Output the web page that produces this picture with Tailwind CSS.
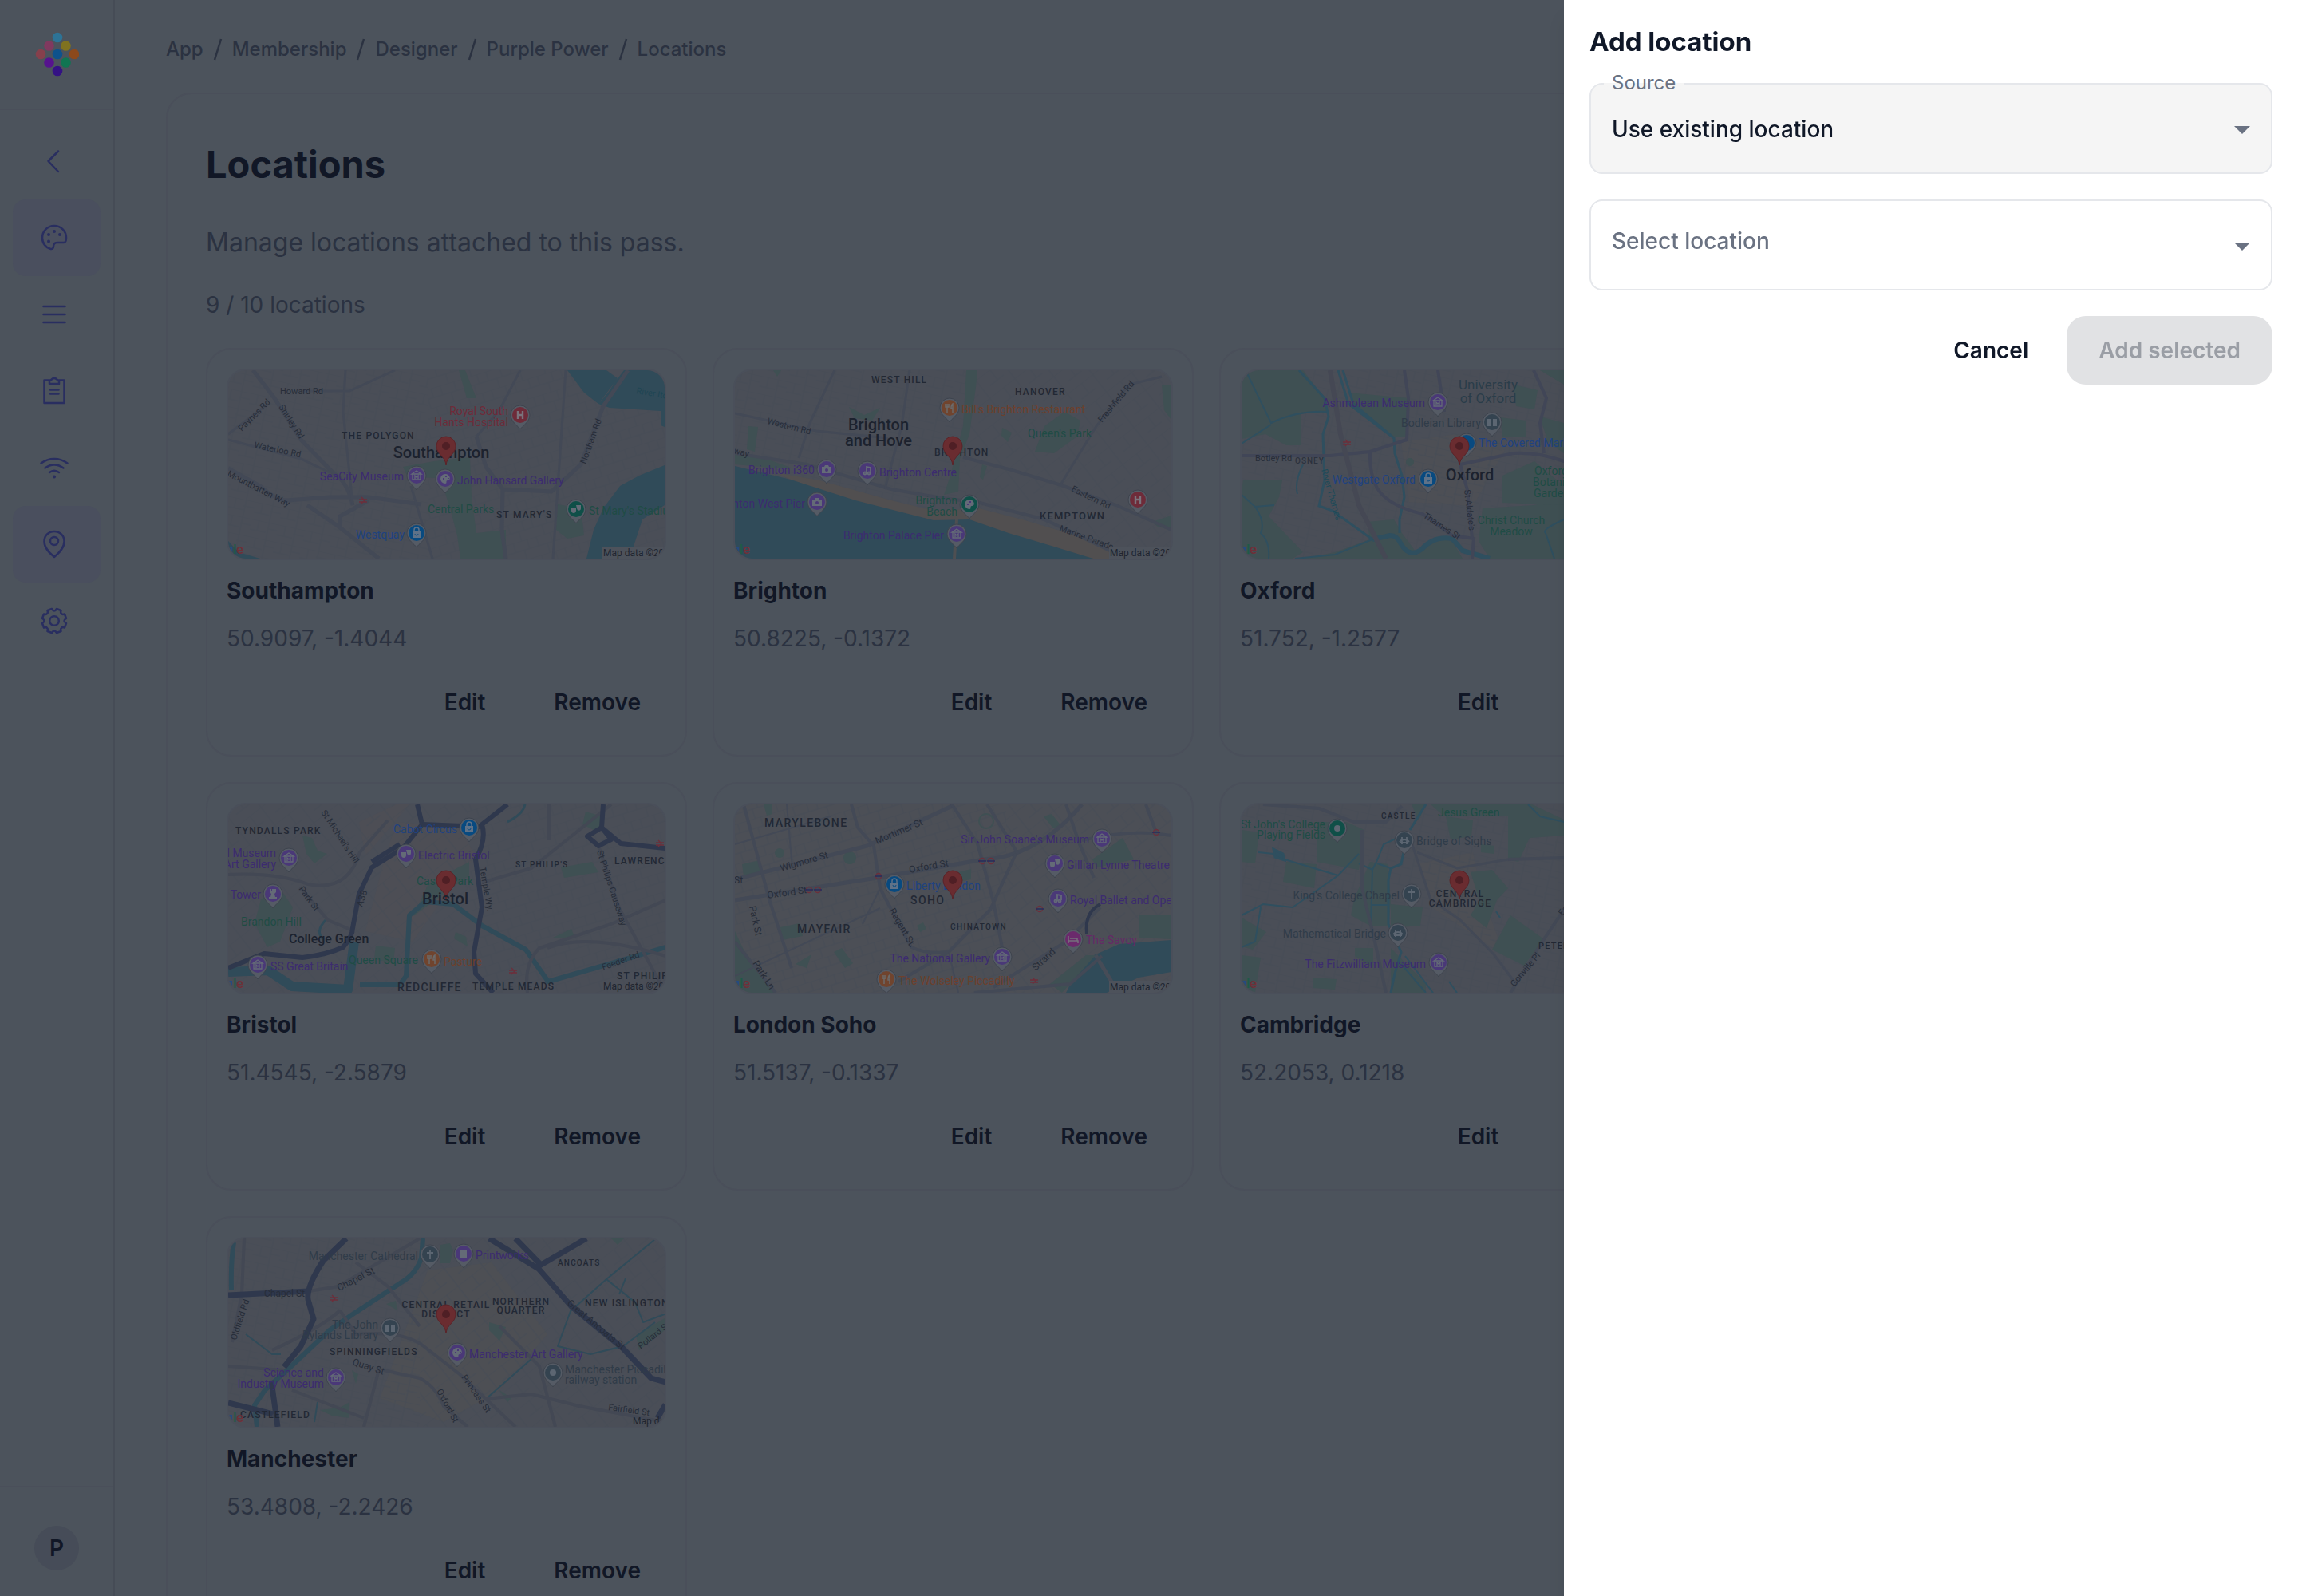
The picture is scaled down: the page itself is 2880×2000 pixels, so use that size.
<!DOCTYPE html>
<html lang="en">

<head>
    <meta charset="UTF-8">
    <meta name="viewport" content="width=device-width, initial-scale=1.0">
    <title>Locations</title>
    <script src="https://cdn.jsdelivr.net/npm/@tailwindcss/browser@4"></script>
</head>

<body class="bg-[#4c535c] font-['Inter',sans-serif] text-[#111726] text-[28px] leading-[44px]">

    <!-- Shared map shapes -->
    <svg class="absolute size-0" aria-hidden="true">
        <defs>
            <pattern id="st1" width="34" height="22" patternUnits="userSpaceOnUse" patternTransform="rotate(12)">
                <path d="M0 0H34M0 13H20M9 0V13M22 0V22M20 8H34" fill="none" stroke="#464b55" stroke-width="1" />
            </pattern>
            <pattern id="st2" width="30" height="24" patternUnits="userSpaceOnUse" patternTransform="rotate(-17)">
                <path d="M0 0H30M0 12H30M8 0V12M19 12V24M26 0V12" fill="none" stroke="#464b55" stroke-width="1" />
            </pattern>
            <pattern id="st3" width="40" height="28" patternUnits="userSpaceOnUse" patternTransform="rotate(-38)">
                <path d="M0 0H40M0 16H22M12 0V16M30 0V28" fill="none" stroke="#464b55" stroke-width="1" />
            </pattern>
            <g id="pin">
                <path d="M0 18C-2 14-12 9-12 0A12 12 0 0 1 12 0C12 9 2 14 0 18Z" fill="#555b65" stroke="#3e444e" stroke-width="1" />
                <circle r="10" fill="currentColor" />
            </g>
            <g id="museum" fill="none" stroke="#646b77" stroke-width="1.3">
                <path d="M-6-2L0-6L6-2ZM-5-2V5H5V-2M-2 4V0L0 2L2 0V4" />
            </g>
            <g id="bag">
                <path d="M-5-2H5V6H-5Z" fill="#5f7288" />
                <path d="M-3-2V-4A3 3 0 0 1 3-4V-2" fill="none" stroke="#5f7288" stroke-width="1.5" />
                <path d="M-2 1A2 2 0 0 0 2 1" fill="none" stroke="#084a80" stroke-width="1" />
            </g>
            <g id="fork" fill="none" stroke="#6b6a6a" stroke-width="1.5">
                <path d="M-5-5V-1H-1V-5M-3-5V6M4 6V-5C2-4 2-1 2 1H4" />
            </g>
            <g id="hosp" fill="none" stroke="#7a737c" stroke-width="2.4">
                <path d="M-3-5V5M3-5V5M-3 0H3" />
            </g>
            <g id="camera">
                <path d="M-6-3H-3L-2-5H2L3-3H6V5H-6Z" fill="#646b77" />
                <circle cy="1" r="2" fill="#4a3878" />
            </g>
            <g id="rook">
                <path d="M-4-6H-2V-4H-1V-6H1V-4H2V-6H4V-2L2 0L3 4H5V6H-5V4H-3L-2 0L-4-2Z" fill="#646b77" />
            </g>
            <g id="music" fill="none" stroke="#646b77" stroke-width="1.8">
                <path d="M-1 3V-5L4-4V2" />
                <circle cx="-3" cy="3" r="1.5" />
                <circle cx="2" cy="3" r="1.5" />
            </g>
            <g id="art" fill="#646b77">
                <path d="M0-6A6 6 0 0 0 0 6C3 6 0 2 3 2C8 2 6-6 0-6Z" />
                <path d="M-3-1H-1V1H-3ZM0-4H2V-2H0ZM3-1H5V0H3Z" fill="#4a3878" />
            </g>
            <g id="masks" fill="#646b77">
                <path d="M-6-2H0V2C0 6-6 6-6 2ZM0-5H6V-1C6 3 1 2 1-1Z" />
            </g>
            <g id="book" fill="#5c6672">
                <path d="M-6-4H-1V5H-6ZM1-4H6V5H1Z" />
            </g>
            <g id="cross" fill="none" stroke="#5c6672" stroke-width="1.8">
                <path d="M0-6V6M-4-2H4" />
            </g>
            <g id="bridge" fill="none" stroke="#5c6672" stroke-width="1.8">
                <path d="M-3-4V5M3-4V5M-6 2C-3-2 3-2 6 2M-5 3H5" />
            </g>
            <g id="dot">
                <circle r="4" fill="#5c6672" />
            </g>
            <g id="marker">
                <path d="M0 0C-1-12-12-13-12-24A12 12 0 0 1 12-24C12-13 1-12 0 0Z" fill="#6a2c30" stroke="#5a2429" stroke-width="1" />
                <circle cy="-24" r="5" fill="#4f1f25" />
            </g>
            <g id="rail">
                <path d="M-5-1H5M-5 2H5M-2-4L2 0L-2 4" fill="none" stroke="#6c2f3b" stroke-width="1.4" />
            </g>
            <g id="tube" fill="none">
                <circle r="3.500" stroke="#6c2f3b" stroke-width="1.300" />
                <path d="M-5 0H5" stroke="#262c5c" stroke-width="1.500" />
            </g>
            <g id="goog" class="font-['Roboto',sans-serif] text-[17px] font-medium">
                <path d="M1 221H5V227Z" fill="#264a80" />
                <text x="6" y="230" fill="#1f5a48">l</text>
                <text x="10" y="230" fill="#6e3039">e</text>
            </g>
        </defs>
    </svg>

    <div class="flex h-screen overflow-hidden">

        <!-- Sidebar -->
        <aside class="flex w-36 shrink-0 flex-col border-r-2 border-[#464c56]">
            <a href="#" aria-label="Home" class="flex h-[138px] items-center justify-center border-b-2 border-[#4a4f5a]">
                <svg class="size-14" viewBox="0 0 56 56">
                    <circle cx="29" cy="7" r="6.300" fill="#2d7396" />
                    <circle cx="18.500" cy="17.500" r="6.300" fill="#80395f" />
                    <circle cx="39.500" cy="17.500" r="6.300" fill="#80721f" />
                    <circle cx="8" cy="28" r="6.300" fill="#86404c" />
                    <circle cx="29" cy="28" r="6.300" fill="#0e528c" />
                    <circle cx="50" cy="28" r="6.300" fill="#8c491c" />
                    <circle cx="18.500" cy="38.500" r="6.300" fill="#56138e" />
                    <circle cx="39.500" cy="38.500" r="6.300" fill="#107552" />
                    <circle cx="29" cy="49" r="6.300" fill="#341284" />
                </svg>
            </a>
            <nav class="flex flex-1 flex-col p-4 text-[#292e60]">
                <a href="#" aria-label="Back" class="flex h-24 items-center rounded-2xl px-8">
                    <svg class="size-10" viewBox="0 0 40 40" fill="none" stroke="currentColor" stroke-width="2.500" stroke-linecap="round" stroke-linejoin="round">
                        <path d="M25 7.500L12.500 20L25 33" />
                    </svg>
                </a>
                <a href="#" aria-label="Design" class="flex h-24 items-center rounded-2xl bg-[#4a4f5e] px-8">
                    <svg class="size-10" viewBox="0 0 40 40" fill="none" stroke="currentColor" stroke-width="2.500" stroke-linejoin="round">
                        <path d="M35 20C35 11.500 28.500 5 20 5S5 11.500 5 20c0 7 4.500 12.500 10.500 14 2 .4 3.500-1 3.500-3 0-3 1.500-5 4.500-5h8.500c2.500 0 3-2 3-6z" />
                        <path d="M20 12h.01M13 16h.01M27 16h.01M13 24.500h.01" stroke-width="4" stroke-linecap="round" />
                    </svg>
                </a>
                <a href="#" aria-label="Fields" class="flex h-24 items-center rounded-2xl px-8">
                    <svg class="size-10" viewBox="0 0 40 40" fill="none" stroke="currentColor" stroke-width="2.500" stroke-linecap="round">
                        <path d="M6.500 10h27M6.500 20h27M6.500 30h27" />
                    </svg>
                </a>
                <a href="#" aria-label="Form" class="flex h-24 items-center rounded-2xl px-8">
                    <svg class="size-10" viewBox="0 0 40 40" fill="none" stroke="currentColor" stroke-width="2.500" stroke-linecap="round" stroke-linejoin="round">
                        <path d="M14 6.500H7.500V35h25V6.500H26" />
                        <path d="M14 11V7.500C16 7 16.500 4 20 4s4 3 6 3.500V11zM15 18.500h10.500M15 23.500h10.500" />
                    </svg>
                </a>
                <a href="#" aria-label="NFC" class="flex h-24 items-center rounded-2xl px-8">
                    <svg class="size-10" viewBox="0 0 40 40" fill="none" stroke="currentColor" stroke-width="2.500" stroke-linecap="round">
                        <path d="M3.500 14.500c10-7.500 23-7.500 33 0M8.500 20.500c7-5.500 16-5.500 23 0M14 26c4-3 8-3 12 0" />
                        <path d="M20 31.500h.01" stroke-width="4" />
                    </svg>
                </a>
                <a href="#" aria-label="Locations" class="flex h-24 items-center rounded-2xl bg-[#4a4f5e] px-8">
                    <svg class="size-10" viewBox="0 0 40 40" fill="none" stroke="currentColor" stroke-width="2.500" stroke-linejoin="round">
                        <path d="M20 36C14 31 7.500 25 7.500 16.500C7.500 9 13 4 20 4s12.500 5 12.500 12.500C32.500 25 26 31 20 36z" />
                        <circle cx="20" cy="16" r="5" />
                    </svg>
                </a>
                <a href="#" aria-label="Settings" class="flex h-24 items-center rounded-2xl px-8">
                    <svg class="size-10" viewBox="0 0 40 40" fill="none" stroke="currentColor" stroke-width="2.500" stroke-linejoin="round">
                        <path d="M32.500 20Q32.500 18.500 35 17L33 11.500Q30 12.500 29 11Q27.500 10 28.500 7L23 5Q21.500 7.500 20 7.500Q18.500 7.500 17 5L11.500 7Q12.500 10 11 11Q10 12.500 7 11.500L5 17Q7.500 18.500 7.500 20Q7.500 21.500 5 23L7 28.500Q10 27.500 11 29Q12.500 30 11.500 33L17 35Q18.500 32.500 20 32.500Q21.500 32.500 23 35L28.500 33Q27.500 30 29 29Q30 27.500 33 28.500L35 23Q32.500 21.500 32.500 20Z" />
                        <circle cx="20" cy="20" r="5.800" />
                    </svg>
                </a>
            </nav>
            <div class="flex justify-center border-t-2 border-[#4a4f5a] pt-12 pb-8">
                <button class="size-14 rounded-full bg-[#464c58] font-semibold">P</button>
            </div>
        </aside>

        <!-- Page -->
        <div class="flex flex-1 flex-col px-16">
            <nav aria-label="Breadcrumb" class="pt-10 text-2xl leading-[44px] font-medium text-[#2b3241]">
                <ol class="flex items-center">
                    <li><a href="#">App</a></li>
                    <li class="flex items-center">
                        <svg class="h-7 w-9" viewBox="0 0 36 28" stroke="currentColor" stroke-width="2.500"><path d="M14 27L22 1" /></svg>
                        <a href="#">Membership</a>
                    </li>
                    <li class="flex items-center">
                        <svg class="h-7 w-9" viewBox="0 0 36 28" stroke="currentColor" stroke-width="2.500"><path d="M14 27L22 1" /></svg>
                        <a href="#">Designer</a>
                    </li>
                    <li class="flex items-center">
                        <svg class="h-7 w-9" viewBox="0 0 36 28" stroke="currentColor" stroke-width="2.500"><path d="M14 27L22 1" /></svg>
                        <a href="#">Purple Power</a>
                    </li>
                    <li class="flex items-center">
                        <svg class="h-7 w-9" viewBox="0 0 36 28" stroke="currentColor" stroke-width="2.500"><path d="M14 27L22 1" /></svg>
                        <a href="#">Locations</a>
                    </li>
                </ol>
            </nav>

            <main class="mt-8 shrink-0 rounded-[32px] border-2 border-[#4a4f5a] px-12 pt-[50px] pb-12">
                <h1 class="text-[47px] leading-[76px] font-bold">Locations</h1>
                <p class="mt-9 text-[32px] leading-[48px] text-[#2b3241]">Manage locations attached to this pass.</p>
                <p class="mt-8 text-[#2b3241]">9 / 10 locations</p>

                <div class="mt-8 grid grid-cols-4 gap-8">

                    <!-- Southampton -->
                    <article class="flex flex-col gap-4 rounded-[32px] border-2 border-[#4a4f5a] p-6">
                        <div class="h-60 overflow-hidden rounded-3xl border-2 border-[#4a4f5a]">
                            <svg class="block h-full w-full bg-[#4a4e57] font-['Roboto',sans-serif]" viewBox="0 0 547 236" preserveAspectRatio="xMidYMid slice">
                                <rect width="250" height="236" fill="url(#st1)" />
                                <rect x="250" width="297" height="236" fill="url(#st2)" />
                                <g fill="#304b59">
                                    <path d="M425 0L446 28L464 42L478 47L542 51V69L547 71V0Z" />
                                    <path d="M547 119L515 132L491 145L470 173L458 200L449 236H503L519 187L536 176L547 169Z" />
                                    <path d="M0 214L13 228L40 236H0Z" />
                                </g>
                                <g fill="#3f5053">
                                    <path d="M219 121L258 114L303 109L305 159L311 204L348 200V236H291L287 207L278 173L266 135L225 134Z" />
                                    <path d="M289 0H297L311 35H299Z" />
                                    <path d="M413 168L442 173L446 207L425 211L411 200Z" />
                                </g>
                                <path d="M474 0L488 10L476 28L464 42L496 0Z" fill="#4a4e57" />
                                <g fill="none" stroke="#434956" stroke-width="5">
                                    <path d="M31 0L58 35L91 87L131 128Q150 140 156 169M0 123L40 145Q60 163 74 163L127 159H176L242 168M99 169L140 197L189 236M176 163L140 183V197" />
                                    <path d="M311 83L323 121L344 149L405 152L442 118L470 45L501 0M344 149L343 200L348 236" />
                                </g>
                                <g fill="none" stroke="#434956" stroke-width="3">
                                    <path d="M147 0L144 52L156 169M90 26H152L209 0M0 80L50 42M0 87L91 111L127 128M229 145L256 236M423 0L407 236M366 0L340 50L311 83" />
                                </g>
                                <g fill="#272d39" class="text-[11px]">
                                    <text x="65" y="30">Howard Rd</text>
                                    <text transform="translate(17 77) rotate(-45)">Paynes Rd</text>
                                    <text transform="translate(63 46) rotate(57)">Shirley Rd</text>
                                    <text transform="translate(32 97) rotate(12)">Waterloo Rd</text>
                                    <text transform="translate(-2 132) rotate(27)">Mountbatten Way</text>
                                    <text transform="translate(448 118) rotate(-70)">Northam Rd</text>
                                    <text transform="translate(511 29) rotate(10)" fill="#1f4553">River Itchen</text>
                                </g>
                                <g fill="#222834" class="text-[12px] font-medium tracking-widest">
                                    <text x="142" y="86">THE POLYGON</text>
                                    <text x="336" y="185">ST MARY'S</text>
                                </g>
                                <text x="267" y="110" text-anchor="middle" fill="#1c222e" class="text-[20px] font-medium">Southampton</text>
                                <g class="text-[14px]">
                                    <text x="351" y="56" text-anchor="end" fill="#6e2b39">Royal South</text>
                                    <text x="351" y="70" text-anchor="end" fill="#6e2b39">Hants Hospital</text>
                                    <text x="220" y="138" text-anchor="end" fill="#3c2b70">SeaCity Museum</text>
                                    <text x="287" y="143" fill="#3c2b70">John Hansard Gallery</text>
                                    <text x="250" y="179" fill="#1f4c45">Central Parks</text>
                                    <text x="452" y="181" fill="#1f4c45">St Mary's Stadium</text>
                                    <text x="221" y="211" text-anchor="end" fill="#204280">Westquay</text>
                                </g>
                                <use href="#pin" x="366" y="56" class="text-[#6e2b39]" /><use href="#hosp" x="366" y="56" />
                                <use href="#pin" x="236" y="132" class="text-[#4a3878]" /><use href="#museum" x="236" y="132" />
                                <use href="#pin" x="272" y="136" class="text-[#4a3878]" /><use href="#art" x="272" y="136" />
                                <use href="#pin" x="436" y="174" class="text-[#0f4f48]" /><use href="#masks" x="436" y="174" />
                                <use href="#pin" x="236" y="204" class="text-[#084a80]" /><use href="#bag" x="236" y="204" />
                                <use href="#rail" x="169" y="163" />
                                <use href="#marker" x="273" y="119" />
                                <rect x="469" y="221" width="78" height="15" fill="#4d525b" />
                                <text x="470" y="233" fill="#1f2530" class="text-[12px]">Map data ©2025</text>
                                <use href="#goog" />
                            </svg>
                        </div>
                        <h2 class="font-bold">Southampton</h2>
                        <p class="text-[#2b3241]">50.9097, -1.4044</p>
                        <div class="flex justify-end gap-[22px]">
                            <button class="h-[84px] rounded-3xl px-8 font-semibold">Edit</button>
                            <button class="h-[84px] rounded-3xl px-8 font-semibold">Remove</button>
                        </div>
                    </article>

                    <!-- Brighton -->
                    <article class="flex flex-col gap-4 rounded-[32px] border-2 border-[#4a4f5a] p-6">
                        <div class="h-60 overflow-hidden rounded-3xl border-2 border-[#4a4f5a]">
                            <svg class="block h-full w-full bg-[#4a4e57] font-['Roboto',sans-serif]" viewBox="0 0 547 236" preserveAspectRatio="xMidYMid slice">
                                <rect width="290" height="236" fill="url(#st1)" />
                                <rect x="290" width="257" height="236" fill="url(#st3)" />
                                <path d="M50 128L106 138L196 163L249 176L306 173L360 187L417 204L466 221L474 236H449L249 200L70 137Z" fill="#514f50" />
                                <path d="M0 120L70 137L151 163L249 188L294 187L343 204L400 221L449 236H0Z" fill="#304b59" />
                                <g fill="#3f5053">
                                    <path d="M0 102L45 113L70 122L45 122L0 118Z" />
                                    <path d="M376 102L388 70L413 52L433 63L429 83L400 104Z" />
                                    <path d="M290 0H304L302 21L294 80L282 111L280 152L262 156L270 132L286 70Z" />
                                    <path d="M17 70L29 71L25 102L15 99ZM143 46L162 56L182 47L172 63L150 60ZM535 18H547V62L538 50ZM310 118L316 120L311 137L307 134ZM335 72L347 78L342 90L334 82ZM48 0H58L53 8Z" />
                                    <path d="M523 190L547 182V200L530 196Z" />
                                </g>
                                <g fill="none" stroke="#434956" stroke-width="4">
                                    <path d="M0 104L90 118L196 149L253 159L307 166L388 187L474 228M286 109L347 125L409 144L478 169L547 200" />
                                    <path d="M219 0L209 70L188 149M535 8L494 18L453 70L409 142" stroke-width="3" />
                                    <path d="M0 54L102 76L192 85M125 0L94 66L80 110" stroke-width="3" />
                                    <path d="M278 187L275 236" stroke="#4e4f52" />
                                </g>
                                <g fill="#272d39" class="text-[11px]">
                                    <text transform="translate(40 67) rotate(14)">Western Rd</text>
                                    <text transform="translate(460 66) rotate(-50)">Freshfield Rd</text>
                                    <text transform="translate(-2 104) rotate(14)">way</text>
                                    <text transform="translate(421 151) rotate(26)">Eastern Rd</text>
                                    <text transform="translate(406 201) rotate(20)">Marine Parade</text>
                                </g>
                                <g fill="#222834" class="text-[12px] font-medium tracking-widest">
                                    <text x="171" y="16">WEST HILL</text>
                                    <text x="351" y="31">HANOVER</text>
                                    <text x="250" y="107">BRIGHTON</text>
                                    <text x="382" y="187" class="text-[13px]">KEMPTOWN</text>
                                </g>
                                <g text-anchor="middle" fill="#1c222e" class="text-[20px] font-medium">
                                    <text x="180" y="75">Brighton</text>
                                    <text x="180" y="95">and Hove</text>
                                </g>
                                <g class="text-[14px]">
                                    <text x="284" y="54" fill="#6e402c">Bill's Brighton Restaurant</text>
                                    <text x="367" y="84" fill="#1f4c45">Queen's Park</text>
                                    <text x="100" y="130" text-anchor="end" fill="#3c2b70">Brighton i360</text>
                                    <text x="181" y="133" fill="#3c2b70">Brighton Centre</text>
                                    <text x="88" y="172" text-anchor="end" fill="#3c2b70">Brighton West Pier</text>
                                    <text x="279" y="168" text-anchor="end" fill="#1f4c45">Brighton</text>
                                    <text x="279" y="182" text-anchor="end" fill="#1f4c45">Beach</text>
                                    <text x="262" y="212" text-anchor="end" fill="#3c2b70">Brighton Palace Pier</text>
                                </g>
                                <use href="#pin" x="269" y="47" class="text-[#70442e]" /><use href="#fork" x="269" y="47" />
                                <use href="#pin" x="115" y="124" class="text-[#4a3878]" /><use href="#camera" x="115" y="124" />
                                <use href="#pin" x="166" y="126" class="text-[#4a3878]" /><use href="#music" x="166" y="126" />
                                <use href="#pin" x="103" y="165" class="text-[#4a3878]" /><use href="#camera" x="103" y="165" />
                                <use href="#pin" x="294" y="168" class="text-[#0f4f48]" /><use href="#art" x="294" y="168" />
                                <use href="#pin" x="505" y="162" class="text-[#6e2b39]" /><use href="#hosp" x="505" y="162" />
                                <use href="#pin" x="278" y="205" class="text-[#4a3878]" /><use href="#museum" x="278" y="205" />
                                <use href="#marker" x="273" y="119" />
                                <rect x="469" y="221" width="78" height="15" fill="#4d525b" />
                                <text x="470" y="233" fill="#1f2530" class="text-[12px]">Map data ©2025</text>
                                <use href="#goog" />
                            </svg>
                        </div>
                        <h2 class="font-bold">Brighton</h2>
                        <p class="text-[#2b3241]">50.8225, -0.1372</p>
                        <div class="flex justify-end gap-[22px]">
                            <button class="h-[84px] rounded-3xl px-8 font-semibold">Edit</button>
                            <button class="h-[84px] rounded-3xl px-8 font-semibold">Remove</button>
                        </div>
                    </article>

                    <!-- Oxford -->
                    <article class="flex flex-col gap-4 rounded-[32px] border-2 border-[#4a4f5a] p-6">
                        <div class="h-60 overflow-hidden rounded-3xl border-2 border-[#4a4f5a]">
                            <svg class="block h-full w-full bg-[#4a4e57] font-['Roboto',sans-serif]" viewBox="0 0 547 236" preserveAspectRatio="xMidYMid slice">
                                <path d="M200 90L270 80L330 100L290 170L210 165Z" fill="#4d4f55" />
                                <rect width="547" height="236" fill="url(#st1)" />
                                <g fill="#3f5053">
                                    <path d="M0 0H77L104 35L107 52L75 54V94L56 94L30 80L0 86Z" />
                                    <path d="M134 28L209 35L207 83H191L144 49Z" />
                                    <path d="M2 137L51 138L47 159L34 183L77 228L64 236H0V152Z" />
                                    <path d="M157 190L191 187L201 204L221 231L244 211L264 214L277 236H77L117 228L161 212Z" />
                                    <path d="M302 173L367 169L404 159H547V236H311L297 214Z" />
                                    <path d="M324 59L357 63V83H327ZM374 58L404 66H547V104H404L384 90ZM327 132L367 114L404 145V169L327 166ZM374 0H547V40L404 18ZM341 18L371 25L367 49L344 45Z" />
                                    <circle cx="211" cy="115" r="5" />
                                </g>
                                <g fill="none" stroke="#2f4f5f" stroke-width="3">
                                    <path d="M72 0L104 35L109 58L102 80L104 138L97 170L114 176L164 212" />
                                    <path d="M164 212L186 207Q195 207 200 218Q211 236 226 224Q241 207 264 211L277 226L311 236" stroke-width="6" />
                                    <path d="M121 0L134 42L191 85L192 104L201 132L204 159L198 187V204M127 0L140 42L191 85" />
                                    <path d="M7 4L37 66Q70 50 107 52M37 68L0 92M0 156L17 171L41 169M17 171Q30 190 24 204Q36 215 34 236M164 212L117 231L67 236M404 187Q375 200 381 204L392 236M70 155Q66 140 77 118" stroke-width="2" />
                                </g>
                                <g fill="none" stroke="#414657" stroke-width="4">
                                    <path d="M0 107H111L161 102L207 87L209 35L204 0M161 102Q160 130 170 148Q184 170 227 180L264 207L291 211L289 236" />
                                    <path d="M274 118L341 104Q370 102 404 114H547M366 0L382 35L374 66L379 104M246 0L254 52M274 118L283 150L289 211" />
                                    <path d="M111 0L124 80L147 169L181 236" stroke="#454854" stroke-width="6" />
                                </g>
                                <g fill="#272d39" class="text-[11px]">
                                    <text x="17" y="114">Botley Rd</text>
                                    <text transform="translate(227 184) rotate(33)">Thames St</text>
                                    <text transform="translate(279 150) rotate(83)">St Aldate's</text>
                                    <text transform="translate(100 125) rotate(74)" fill="#1e4a58">River Thames</text>
                                </g>
                                <text x="67" y="117" fill="#2c323e" class="text-[10px] font-medium tracking-widest">OSNEY</text>
                                <g text-anchor="middle" fill="#2a3d4a" class="text-[17px]">
                                    <text x="309" y="24">University</text>
                                    <text x="309" y="41">of Oxford</text>
                                </g>
                                <g class="text-[14px]">
                                    <text x="230" y="46" text-anchor="end" fill="#3c2b70">Ashmolean Museum</text>
                                    <text x="300" y="71" text-anchor="end" fill="#303c49">Bodleian Library</text>
                                    <text x="297" y="96" fill="#204280">The Covered Market</text>
                                    <text x="218" y="142" text-anchor="end" fill="#204280">Westgate Oxford</text>
                                    <text x="367" y="131" fill="#1f4c45">Oxford</text>
                                    <text x="365" y="145" fill="#1f4c45">Botanic</text>
                                    <text x="366" y="159" fill="#1f4c45">Garden</text>
                                    <text x="338" y="193" text-anchor="middle" fill="#1f4c45">Christ Church</text>
                                    <text x="338" y="207" text-anchor="middle" fill="#1f4c45">Meadow</text>
                                </g>
                                <text x="286" y="138" text-anchor="middle" fill="#1c222e" class="text-[20px] font-medium">Oxford</text>
                                <use href="#pin" x="246" y="40" class="text-[#4a3878]" /><use href="#museum" x="246" y="40" />
                                <use href="#pin" x="314" y="65" class="text-[#344350]" /><use href="#book" x="314" y="65" />
                                <use href="#pin" x="282" y="91" class="text-[#084a80]" />
                                <use href="#pin" x="234" y="136" class="text-[#084a80]" /><use href="#bag" x="234" y="136" />
                                <use href="#rail" x="132" y="91" />
                                <use href="#marker" x="273" y="119" />
                                <use href="#goog" />
                            </svg>
                        </div>
                        <h2 class="font-bold">Oxford</h2>
                        <p class="text-[#2b3241]">51.752, -1.2577</p>
                        <div class="flex justify-end gap-[22px]">
                            <button class="h-[84px] rounded-3xl px-8 font-semibold">Edit</button>
                            <button class="h-[84px] rounded-3xl px-8 font-semibold">Remove</button>
                        </div>
                    </article>

                    <article class="rounded-[32px] border-2 border-[#4a4f5a]"></article>

                    <!-- Bristol -->
                    <article class="flex flex-col gap-4 rounded-[32px] border-2 border-[#4a4f5a] p-6">
                        <div class="h-60 overflow-hidden rounded-3xl border-2 border-[#4a4f5a]">
                            <svg class="block h-full w-full bg-[#4a4e57] font-['Roboto',sans-serif]" viewBox="0 0 547 236" preserveAspectRatio="xMidYMid slice">
                                <path d="M211 22L290 29L310 65L290 89L231 172L172 159L195 72ZM164 22L211 0H227L172 65Z" fill="#4d4e55" />
                                <rect width="300" height="236" fill="url(#st3)" />
                                <rect x="300" width="247" height="236" fill="url(#st2)" />
                                <g fill="#3f5053">
                                    <path d="M251 99L302 72V89L247 129L232 140ZM41 119L65 105L81 129L65 172L49 179L33 149ZM93 39L105 42L112 58L124 62L108 74L98 62ZM448 9L468 15L464 35L444 25ZM185 177L209 180L207 199L183 194ZM417 79L456 72L464 85L421 92ZM285 160L298 166L300 178L283 168ZM405 168L430 156L434 166Z" />
                                </g>
                                <g fill="none" stroke="#304b59" stroke-width="8" stroke-linejoin="round">
                                    <path d="M0 210L50 208L80 228L150 232L158 172" stroke-width="12" />
                                    <path d="M165 226H215L223 215L227 139L247 122L282 125L318 152L373 182L401 222L460 205L548 179" stroke-width="6" />
                                    <path d="M372 0Q370 12 350 22M122 145Q108 160 120 170" stroke-width="3" />
                                </g>
                                <g fill="none" stroke="#434854" stroke-width="4">
                                    <path d="M318 98L380 80L430 40L480 0M0 88Q60 85 100 100Q150 110 165 60L200 20M548 236L490 130L464 52M375 236Q370 200 390 180L480 150L548 120M400 180Q450 160 548 190M90 104L125 145L156 158M402 0V45" />
                                </g>
                                <g fill="none" stroke="#2f384d" stroke-width="6" stroke-linejoin="round">
                                    <path d="M0 205L45 187L93 192Q125 188 144 179Q156 165 156 155L164 112L180 79L219 55L243 25L237 0M180 72L215 50" />
                                    <path d="M350 0L318 25Q324 45 310 69L318 129L308 185L310 212L332 236M243 25L318 28" />
                                    <path d="M470 0L468 29L450 40L464 52L480 44L468 29L492 49L548 55" />
                                </g>
                                <g fill="#272d39" class="text-[11px]">
                                    <text transform="translate(116 10) rotate(57)">St Michael's Hill</text>
                                    <text transform="translate(88 106) rotate(54)">Park St</text>
                                    <text transform="translate(168 129) rotate(-72)" class="text-[12px]">A38</text>
                                    <text transform="translate(315 79) rotate(80)">Temple Wy.</text>
                                    <text transform="translate(462 59) rotate(72)">St Philips Causeway</text>
                                    <text transform="translate(470 208) rotate(-20)">Feeder Rd</text>
                                </g>
                                <g fill="#222834" class="text-[12px] font-medium tracking-widest">
                                    <text x="9" y="37">TYNDALLS PARK</text>
                                    <text x="360" y="79" class="text-[10px]">ST PHILIP'S</text>
                                    <text x="484" y="75">LAWRENCE HILL</text>
                                    <text x="487" y="219">ST PHILIP'S</text>
                                    <text x="212" y="234" class="text-[14px]">REDCLIFFE</text>
                                    <text x="306" y="232">TEMPLE MEADS</text>
                                </g>
                                <g class="text-[14px]">
                                    <text x="60" y="66" text-anchor="end" fill="#3c2b70">Bristol Museum</text>
                                    <text x="60" y="80" text-anchor="end" fill="#3c2b70">&amp; Art Gallery</text>
                                    <text x="41" y="118" text-anchor="end" fill="#3c2b70">Tower</text>
                                    <text x="287" y="36" text-anchor="end" fill="#204280">Cabot Circus</text>
                                    <text x="238" y="69" fill="#3c2b70">Electric Bristol</text>
                                    <text x="236" y="101" fill="#1f4c45">Castle Park</text>
                                    <text x="16" y="152" fill="#1f4c45">Brandon Hill</text>
                                    <text x="151" y="200" fill="#1f4c45">Queen Square</text>
                                    <text x="270" y="202" fill="#6e402c">Pasture</text>
                                    <text x="53" y="208" fill="#3c2b70">SS Great Britain</text>
                                </g>
                                <text x="76" y="174" fill="#1c222e" class="text-[16px] font-medium">College Green</text>
                                <use href="#pin" x="76" y="67" class="text-[#4a3878]" /><use href="#museum" x="76" y="67" />
                                <use href="#pin" x="56" y="112" class="text-[#4a3878]" /><use href="#rook" x="56" y="112" />
                                <use href="#pin" x="302" y="29" class="text-[#084a80]" /><use href="#bag" x="302" y="29" />
                                <use href="#pin" x="223" y="62" class="text-[#4a3878]" /><use href="#masks" x="223" y="62" />
                                <use href="#pin" x="255" y="194" class="text-[#70442e]" /><use href="#fork" x="255" y="194" />
                                <use href="#pin" x="37" y="201" class="text-[#4a3878]" /><use href="#museum" x="37" y="201" />
                                <use href="#rail" x="541" y="49" /><use href="#rail" x="357" y="209" />
                                <use href="#marker" x="273" y="119" />
                                <text x="272" y="125" text-anchor="middle" fill="#1c222e" class="text-[20px] font-medium">Bristol</text>
                                <text x="470" y="232" fill="#1f2530" class="text-[12px]">Map data ©2025</text>
                                <use href="#goog" />
                            </svg>
                        </div>
                        <h2 class="font-bold">Bristol</h2>
                        <p class="text-[#2b3241]">51.4545, -2.5879</p>
                        <div class="flex justify-end gap-[22px]">
                            <button class="h-[84px] rounded-3xl px-8 font-semibold">Edit</button>
                            <button class="h-[84px] rounded-3xl px-8 font-semibold">Remove</button>
                        </div>
                    </article>

                    <!-- London Soho -->
                    <article class="flex flex-col gap-4 rounded-[32px] border-2 border-[#4a4f5a] p-6">
                        <div class="h-60 overflow-hidden rounded-3xl border-2 border-[#4a4f5a]">
                            <svg class="block h-full w-full bg-[#4c4f56] font-['Roboto',sans-serif]" viewBox="0 0 547 236" preserveAspectRatio="xMidYMid slice">
                                <rect width="340" height="236" fill="url(#st2)" />
                                <rect x="340" width="207" height="236" fill="url(#st3)" />
                                <path d="M415 236L427 212L450 189L482 175L547 170V210L506 217L466 236Z" fill="#304b59" />
                                <g fill="#3f5053">
                                    <path d="M0 159L19 199L51 236H0ZM9 75L31 70L33 87L11 90ZM57 154L81 149L85 165L59 170ZM124 185L134 180L148 199L138 205ZM448 69L486 42L500 69L454 79ZM387 15L397 12L409 27L399 30ZM395 225L440 189L452 189L410 236ZM506 139H547V169L506 167ZM280 85L296 81V94L284 96ZM36 0H47V12L40 14ZM228 152L236 148L240 156L232 160ZM76 200L96 188L90 205Z" />
                                    <circle cx="56" cy="61" r="6" />
                                    <circle cx="144" cy="67" r="8" />
                                </g>
                                <circle cx="315" cy="21" r="9" fill="none" stroke="#3f5053" stroke-width="2" />
                                <path d="M452 189L472 222" fill="none" stroke="#464c57" stroke-width="5" />
                                <g fill="none" stroke="#434956" stroke-width="5">
                                    <path d="M0 120L178 92L312 69Q380 65 435 0M0 94L166 52L272 2" />
                                    <path d="M146 0L154 29L174 52L182 105L221 179Q240 188 268 185L320 132L352 62M205 222L268 185M0 172L51 236M11 0L43 119L71 205" stroke-width="4" />
                                    <path d="M272 0L304 49L324 122L336 185M415 0L432 50L450 92M324 229L415 172L458 129M435 45Q500 30 546 39M316 0L355 62M515 0L528 35M300 236L420 225L460 190" stroke-width="4" />
                                    <path d="M0 50L120 15M0 215L182 130M65 0L72 80M182 105L160 150M268 185L280 236" stroke-width="2" />
                                </g>
                                <path d="M458 125Q438 135 441 162" fill="none" stroke="#2f384d" stroke-width="4" />
                                <g fill="#272d39" class="text-[12px]">
                                    <text transform="translate(178 50) rotate(-23)">Mortimer St</text>
                                    <text transform="translate(58 84) rotate(-16)">Wigmore St</text>
                                    <text transform="translate(219 86) rotate(-10)">Oxford St</text>
                                    <text transform="translate(41 118) rotate(-8)">Oxford St</text>
                                    <text x="-1" y="99">St</text>
                                    <text transform="translate(18 128) rotate(78)">Park St</text>
                                    <text transform="translate(193 133) rotate(60)">Regent St.</text>
                                    <text transform="translate(22 199) rotate(57)">Park Ln</text>
                                    <text transform="translate(377 209) rotate(-43)">Strand</text>
                                </g>
                                <g fill="#222834" class="text-[14px] font-medium tracking-widest">
                                    <text x="37" y="28">MARYLEBONE</text>
                                    <text x="220" y="125" class="text-[14px]">SOHO</text>
                                    <text x="78" y="161" class="text-[14px]">MAYFAIR</text>
                                    <text x="270" y="157" class="text-[10px]">CHINATOWN</text>
                                </g>
                                <g class="text-[14px]">
                                    <text x="444" y="49" text-anchor="end" fill="#3c2b70">Sir John Soane's Museum</text>
                                    <text x="416" y="81" fill="#3c2b70">Gillian Lynne Theatre</text>
                                    <text x="215" y="107" fill="#204280">Liberty London</text>
                                    <text x="420" y="125" fill="#3c2b70">Royal Ballet and Opera</text>
                                    <text x="320" y="198" text-anchor="end" fill="#3c2b70">The National Gallery</text>
                                    <text x="440" y="175" fill="#652a66">The Savoy</text>
                                    <text x="205" y="226" fill="#6e402c">The Wolseley Piccadilly</text>
                                </g>
                                <use href="#tube" x="93" y="107" /><use href="#tube" x="104" y="107" /><use href="#tube" x="180" y="90" />
                                <use href="#tube" x="310" y="71" /><use href="#tube" x="321" y="71" /><use href="#tube" x="382" y="131" />
                                <use href="#tube" x="528" y="35" /><use href="#rail" x="375" y="221" />
                                <use href="#pin" x="460" y="43" class="text-[#4a3878]" /><use href="#museum" x="460" y="43" />
                                <use href="#pin" x="401" y="74" class="text-[#4a3878]" /><use href="#masks" x="401" y="74" />
                                <use href="#pin" x="200" y="100" class="text-[#084a80]" /><use href="#bag" x="200" y="100" />
                                <use href="#pin" x="405" y="118" class="text-[#4a3878]" /><use href="#music" x="405" y="118" />
                                <use href="#pin" x="335" y="191" class="text-[#4a3878]" /><use href="#museum" x="335" y="191" />
                                <use href="#pin" x="424" y="169" class="text-[#6b2a6c]" />
                                <path d="M418 165V174M418 171H430V174M420 168H429V171" fill="none" stroke="#76707c" stroke-width="1.500" />
                                <use href="#pin" x="190" y="219" class="text-[#70442e]" /><use href="#fork" x="190" y="219" />
                                <use href="#marker" x="273" y="119" />
                                <rect x="469" y="221" width="78" height="15" fill="#4d525b" />
                                <text x="470" y="233" fill="#1f2530" class="text-[12px]">Map data ©2025</text>
                                <use href="#goog" />
                            </svg>
                        </div>
                        <h2 class="font-bold">London Soho</h2>
                        <p class="text-[#2b3241]">51.5137, -0.1337</p>
                        <div class="flex justify-end gap-[22px]">
                            <button class="h-[84px] rounded-3xl px-8 font-semibold">Edit</button>
                            <button class="h-[84px] rounded-3xl px-8 font-semibold">Remove</button>
                        </div>
                    </article>

                    <!-- Cambridge -->
                    <article class="flex flex-col gap-4 rounded-[32px] border-2 border-[#4a4f5a] p-6">
                        <div class="h-60 overflow-hidden rounded-3xl border-2 border-[#4a4f5a]">
                            <svg class="block h-full w-full bg-[#4a4e57] font-['Roboto',sans-serif]" viewBox="0 0 547 236" preserveAspectRatio="xMidYMid slice">
                                <path d="M220 75L290 60L300 110L330 190L300 170L240 130Z" fill="#4d4f55" />
                                <rect width="547" height="236" fill="url(#st1)" />
                                <g fill="#3f5053">
                                    <path d="M96 22L131 22L154 32L147 82L94 72ZM0 32L22 35L17 74L0 72ZM56 72L94 75L91 105L52 97ZM237 0H364L404 19H547V39H404L361 42L347 72L334 69V15H254Z" />
                                    <path d="M161 72L184 75L187 125L184 152H161L137 139L141 119ZM187 125L227 129L224 152L187 155ZM287 85L314 82L334 105L320 120L307 155L287 139L298 120ZM337 139L379 169L354 202L314 182Z" />
                                    <path d="M0 142L31 160L14 182L0 178ZM0 189L24 192L17 236H0ZM187 180L231 225V236H187ZM89 217L119 219L117 232L89 230ZM142 180L165 180V205L142 190ZM213 0H231L222 20ZM256 15L290 20L288 40L262 44ZM300 50L317 52V62L300 60Z" />
                                </g>
                                <g fill="none" stroke="#2f4f5f" stroke-width="3">
                                    <path d="M231 0L211 32M204 55L200 75L187 80L184 95V150L200 185L192 212L187 236" />
                                    <path d="M204 38L178 50L170 70L164 82L147 74M170 74L187 80M164 82L162 150M164 126H184M359 0L374 15L404 22H547" stroke-width="2" />
                                    <path d="M21 60L40 62L54 69L121 89L147 62M121 89L64 129L27 125L0 139M24 129L17 172L0 179M200 200L231 236M205 190L240 236M260 222L270 236M319 134L324 142" stroke-width="2" />
                                    <path d="M40 56L52 62L54 70L42 66Z" fill="#2f4f5f" />
                                </g>
                                <g fill="none" stroke="#434956" stroke-width="4">
                                    <path d="M27 0L97 5L141 22H181L201 2M151 32V105L167 172L181 236M334 69L404 67H547M337 236L377 172L404 132" />
                                    <path d="M211 42L237 119L274 145L317 189L344 225M220 60L270 80L334 69" stroke-width="3" />
                                </g>
                                <g fill="#222834" class="text-[12px] font-medium tracking-widest">
                                    <text x="175" y="18" class="text-[10px]">CASTLE</text>
                                    <text x="274" y="116" text-anchor="middle">CENTRAL</text>
                                    <text x="274" y="128" text-anchor="middle">CAMBRIDGE</text>
                                    <text x="372" y="181" class="text-[11px]">PETERSFIELD</text>
                                </g>
                                <text transform="translate(342 229) rotate(-50)" fill="#272d39" class="text-[11px]">Gonville Pl</text>
                                <text transform="translate(402 140) rotate(-50)" fill="#272d39" class="text-[11px]">East Rd</text>
                                <g class="text-[14px]">
                                    <text x="105" y="30" text-anchor="end" fill="#1f4c45">St John's College</text>
                                    <text x="105" y="43" text-anchor="end" fill="#1f4c45">Playing Fields</text>
                                    <text x="246" y="15" fill="#1f4c45">Jesus Green</text>
                                    <text x="219" y="51" fill="#303c49">Bridge of Sighs</text>
                                    <text x="198" y="119" text-anchor="end" fill="#303c49">King's College Chapel</text>
                                    <text x="181" y="167" text-anchor="end" fill="#303c49">Mathematical Bridge</text>
                                    <text x="231" y="205" text-anchor="end" fill="#3c2b70">The Fitzwilliam Museum</text>
                                </g>
                                <use href="#pin" x="120" y="30" class="text-[#0f4f48]" /><use href="#dot" x="120" y="30" />
                                <use href="#pin" x="204" y="45" class="text-[#344350]" /><use href="#bridge" x="204" y="45" />
                                <use href="#pin" x="213" y="112" class="text-[#344350]" /><use href="#cross" x="213" y="112" />
                                <use href="#pin" x="196" y="161" class="text-[#344350]" /><use href="#bridge" x="196" y="161" />
                                <use href="#pin" x="247" y="198" class="text-[#4a3878]" /><use href="#museum" x="247" y="198" />
                                <use href="#marker" x="273" y="119" />
                                <use href="#goog" />
                            </svg>
                        </div>
                        <h2 class="font-bold">Cambridge</h2>
                        <p class="text-[#2b3241]">52.2053, 0.1218</p>
                        <div class="flex justify-end gap-[22px]">
                            <button class="h-[84px] rounded-3xl px-8 font-semibold">Edit</button>
                            <button class="h-[84px] rounded-3xl px-8 font-semibold">Remove</button>
                        </div>
                    </article>

                    <article class="rounded-[32px] border-2 border-[#4a4f5a]"></article>

                    <!-- Manchester -->
                    <article class="flex flex-col gap-4 rounded-[32px] border-2 border-[#4a4f5a] p-6">
                        <div class="h-60 overflow-hidden rounded-3xl border-2 border-[#4a4f5a]">
                            <svg class="block h-full w-full bg-[#4a4e57] font-['Roboto',sans-serif]" viewBox="0 0 547 236" preserveAspectRatio="xMidYMid slice">
                                <path d="M250 40L330 30L400 120L340 190L270 230L190 200Z" fill="#4d4f54" />
                                <rect width="240" height="236" fill="url(#st1)" />
                                <rect x="240" width="307" height="236" fill="url(#st3)" />
                                <g fill="#3f5053">
                                    <path d="M266 8L278 6L282 15L278 31L266 31ZM327 105L348 111L340 128L327 115ZM115 215L140 212L152 205V225L130 222ZM198 82L210 78L212 90ZM511 121L547 100V115L515 140ZM340 190L355 200L350 205ZM480 0H496L488 8ZM155 165L163 170L160 182Z" />
                                </g>
                                <g fill="none" stroke="#304b59" stroke-width="6" stroke-linejoin="round">
                                    <path d="M7 5Q3 30 4 65" />
                                    <path d="M244 0L242 25Q235 45 217 55L156 95L127 115L78 161L46 190L33 209L36 236" />
                                    <path d="M535 1L474 51L429 91L413 135L454 145L495 135L535 105M380 151L323 201M22 120L55 145H66M474 51L510 80L520 105L547 95M490 70L498 50M112 205L108 230" stroke-width="2" />
                                </g>
                                <g fill="none" stroke="#434854" stroke-width="4">
                                    <path d="M20 0L17 70L5 130M101 66L138 60L240 0M140 90L160 120Q220 115 245 135L290 170L360 236M190 160L170 236M195 165L240 175Q260 185 270 210L300 236M340 110L390 160L410 236M323 201L380 195L440 210L547 230M80 190L170 225M0 160L70 165M160 30L200 60L240 110M55 140Q120 110 140 90" />
                                </g>
                                <g fill="none" stroke="#2f384d" stroke-width="7" stroke-linejoin="round">
                                    <path d="M148 0L119 28Q95 65 101 80L107 101L91 135L70 161M54 178L62 236M0 71L101 66M0 206L56 220" />
                                    <path d="M327 0L389 38L430 85L495 138L530 175L548 180M360 0L392 33L449 0M548 208L538 225" />
                                </g>
                                <g fill="#272d39" class="text-[11px]">
                                    <text transform="translate(139 66) rotate(-27)" class="text-[12px]">Chapel St</text>
                                    <text x="45" y="73" class="text-[12px]">Chapel St</text>
                                    <text transform="translate(10 128) rotate(-72)">Oldfield Rd</text>
                                    <text transform="translate(424 82) rotate(40)" class="text-[12px]">Great Ancoats St</text>
                                    <text transform="translate(517 139) rotate(-38)">Pollard St</text>
                                    <text transform="translate(155 158) rotate(18)" class="text-[12px]">Quay St</text>
                                    <text transform="translate(292 174) rotate(55)">Princess St</text>
                                    <text transform="translate(261 191) rotate(62)">Oxford St</text>
                                    <text transform="translate(476 215) rotate(8)">Fairfield St</text>
                                </g>
                                <g fill="#222834" class="text-[12px] font-medium tracking-widest">
                                    <text x="413" y="34" class="text-[10px]">ANCOATS</text>
                                    <text x="273" y="87" text-anchor="middle">CENTRAL RETAIL</text>
                                    <text x="273" y="99" text-anchor="middle">DISTRICT</text>
                                    <text x="367" y="83" text-anchor="middle">NORTHERN</text>
                                    <text x="367" y="94" text-anchor="middle">QUARTER</text>
                                    <text x="447" y="85">NEW ISLINGTON</text>
                                    <text x="127" y="146">SPINNINGFIELDS</text>
                                    <text x="15" y="225">CASTLEFIELD</text>
                                </g>
                                <g class="text-[14px]">
                                    <text x="238" y="27" text-anchor="end" fill="#303c49">Manchester Cathedral</text>
                                    <text x="310" y="26" fill="#3c2b70">Printworks</text>
                                    <text x="188" y="113" text-anchor="end" fill="#303c49">The John</text>
                                    <text x="188" y="126" text-anchor="end" fill="#303c49">Rylands Library</text>
                                    <text x="302" y="150" fill="#3c2b70">Manchester Art Gallery</text>
                                    <text x="422" y="169" fill="#303c49">Manchester Piccadilly</text>
                                    <text x="422" y="182" fill="#303c49">railway station</text>
                                    <text x="120" y="173" text-anchor="end" fill="#3c2b70">Science and</text>
                                    <text x="120" y="187" text-anchor="end" fill="#3c2b70">Industry Museum</text>
                                </g>
                                <use href="#pin" x="253" y="20" class="text-[#344350]" /><use href="#cross" x="253" y="20" />
                                <use href="#pin" x="295" y="19" class="text-[#4a3878]" />
                                <path d="M291 14H299V25H291Z" fill="#646b77" />
                                <use href="#pin" x="203" y="112" class="text-[#344350]" /><use href="#book" x="203" y="112" />
                                <use href="#pin" x="287" y="143" class="text-[#4a3878]" /><use href="#art" x="287" y="143" />
                                <use href="#pin" x="407" y="168" class="text-[#344350]" /><use href="#dot" x="407" y="168" />
                                <use href="#pin" x="135" y="174" class="text-[#4a3878]" /><use href="#museum" x="135" y="174" />
                                <use href="#rail" x="132" y="75" />
                                <use href="#marker" x="273" y="119" />
                                <text x="507" y="233" fill="#1f2530" class="text-[12px]">Map data ©2025</text>
                                <use href="#goog" />
                            </svg>
                        </div>
                        <h2 class="font-bold">Manchester</h2>
                        <p class="text-[#2b3241]">53.4808, -2.2426</p>
                        <div class="flex justify-end gap-[22px]">
                            <button class="h-[84px] rounded-3xl px-8 font-semibold">Edit</button>
                            <button class="h-[84px] rounded-3xl px-8 font-semibold">Remove</button>
                        </div>
                    </article>
                </div>
            </main>
        </div>
    </div>

    <!-- Drawer -->
    <section role="dialog" aria-labelledby="drawerTitle" class="fixed inset-y-0 right-0 flex w-[920px] flex-col gap-8 bg-white p-8 text-gray-900 shadow-xl">
        <h2 id="drawerTitle" class="text-[33px] leading-10 font-bold">Add location</h2>

        <div class="relative">
            <select id="source" class="block h-[114px] w-full appearance-none rounded-2xl border-2 border-gray-200 bg-neutral-100 px-[26px] pt-0.5 font-medium">
                <option>Use existing location</option>
            </select>
            <label for="source" class="absolute -top-4 left-[18px] bg-linear-to-b from-white from-50% to-neutral-100 to-50% px-[10px] text-2xl leading-8 text-gray-500">Source</label>
            <svg class="pointer-events-none absolute top-[54px] right-7 h-[10px] w-5 fill-gray-500" viewBox="0 0 20 10"><path d="M0 0H20L10 10Z" /></svg>
        </div>

        <div class="relative">
            <select id="location" aria-label="Select location" class="block h-[114px] w-full appearance-none rounded-2xl border-2 border-gray-200 bg-white px-[26px] pb-[10px] font-medium text-gray-500">
                <option>Select location</option>
            </select>
            <svg class="pointer-events-none absolute top-[54px] right-7 h-[10px] w-5 fill-gray-500" viewBox="0 0 20 10"><path d="M0 0H20L10 10Z" /></svg>
        </div>

        <div class="flex justify-end gap-2">
            <button class="h-[86px] rounded-3xl px-10 font-semibold">Cancel</button>
            <button disabled class="h-[86px] rounded-3xl bg-[#e1e2e4] px-10 font-semibold text-[#9a9ea5]">Add selected</button>
        </div>
    </section>

</body>

</html>
